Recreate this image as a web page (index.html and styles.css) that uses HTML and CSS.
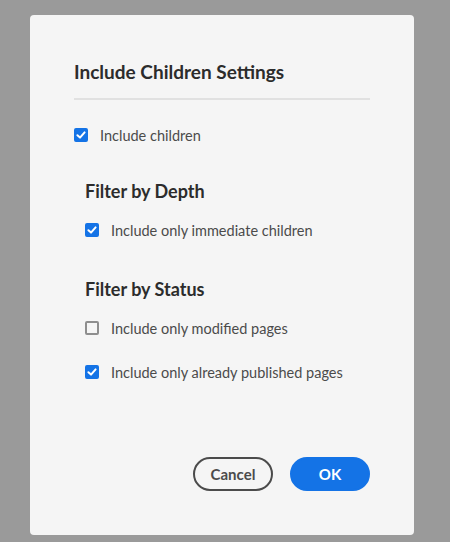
FILE: index.html
```html
<!DOCTYPE html>
<html lang="en">
<head>
<meta charset="utf-8">
<title>Include Children Settings</title>
<link rel="stylesheet" href="styles.css">
</head>
<body>
<div class="dialog" role="dialog" aria-labelledby="dlg-title">
  <h2 class="title" id="dlg-title">Include Children Settings</h2>
  <hr class="divider">
  <label class="check row-main">
    <span class="box checked"><svg viewBox="0 0 14 14"><path d="M3.4 7.2 L6 9.6 L10.6 4.4" /></svg></span>
    <span class="label">Include children</span>
  </label>
  <div class="section">
    <h3 class="heading heading-depth">Filter by Depth</h3>
    <label class="check">
      <span class="box checked"><svg viewBox="0 0 14 14"><path d="M3.4 7.2 L6 9.6 L10.6 4.4" /></svg></span>
      <span class="label">Include only immediate children</span>
    </label>
    <h3 class="heading heading-status">Filter by Status</h3>
    <label class="check">
      <span class="box"></span>
      <span class="label">Include only modified pages</span>
    </label>
    <label class="check row-last">
      <span class="box checked"><svg viewBox="0 0 14 14"><path d="M3.4 7.2 L6 9.6 L10.6 4.4" /></svg></span>
      <span class="label">Include only already published pages</span>
    </label>
  </div>
  <div class="actions">
    <button class="btn btn-secondary" type="button">Cancel</button>
    <button class="btn btn-primary" type="button">OK</button>
  </div>
</div>
</body>
</html>
```
FILE: styles.css
```css
* { box-sizing: border-box; }
html, body {
  margin: 0;
  padding: 0;
  background: #9a9a9a;
  height: 100%;
}
body {
  font-family: Lato, "Open Sans", "Liberation Sans", sans-serif;
  color: #2c2c2c;
  padding: 15px 0 0 30px;
}
.dialog {
  width: 384px;
  height: 520px;
  background: #f5f5f5;
  border-radius: 4px;
  padding: 45px 44px 44px 44px;
  display: flex;
  flex-direction: column;
}
.title {
  margin: 0;
  font-size: 19px;
  line-height: 24px;
  font-weight: 700;
  color: #2c2c2c;
}
.divider {
  margin: 14px 0 0 0;
  border: 0;
  height: 2px;
  background: #e1e1e1;
}
.check {
  display: flex;
  align-items: center;
  height: 20px;
  font-size: 14.5px;
  color: #4b4b4b;
}
.row-main { margin-top: 25px; }
.box {
  width: 14px;
  height: 14px;
  border: 2px solid #8e8e8e;
  border-radius: 2px;
  flex: none;
  margin-right: 12px;
  display: flex;
  background: #f5f5f5;
}
.box.checked {
  background: #1473e6;
  border-color: #1473e6;
}
.box svg {
  width: 14px;
  height: 14px;
  margin: -2px;
}
.box path {
  fill: none;
  stroke: #fff;
  stroke-width: 2;
  stroke-linecap: round;
  stroke-linejoin: round;
}
.section {
  padding-left: 11px;
  display: flex;
  flex-direction: column;
}
.heading {
  margin: 0 0 18px 0;
  font-size: 18px;
  line-height: 22px;
  font-weight: 700;
  color: #2c2c2c;
}
.heading-depth { margin-top: 35px; }
.heading-status { margin-top: 38px; }
.row-last { margin-top: 24px; }
.actions {
  margin-top: auto;
  display: flex;
  justify-content: flex-end;
  gap: 17px;
}
.btn {
  width: 80px;
  height: 34px;
  border-radius: 17px;
  font-family: inherit;
  font-size: 15px;
  font-weight: 700;
  padding: 0;
  cursor: pointer;
}
.btn-secondary {
  background: transparent;
  border: 2px solid #4b4b4b;
  color: #4b4b4b;
}
.btn-primary {
  background: #1473e6;
  border: 2px solid #1473e6;
  color: #fff;
}
```
